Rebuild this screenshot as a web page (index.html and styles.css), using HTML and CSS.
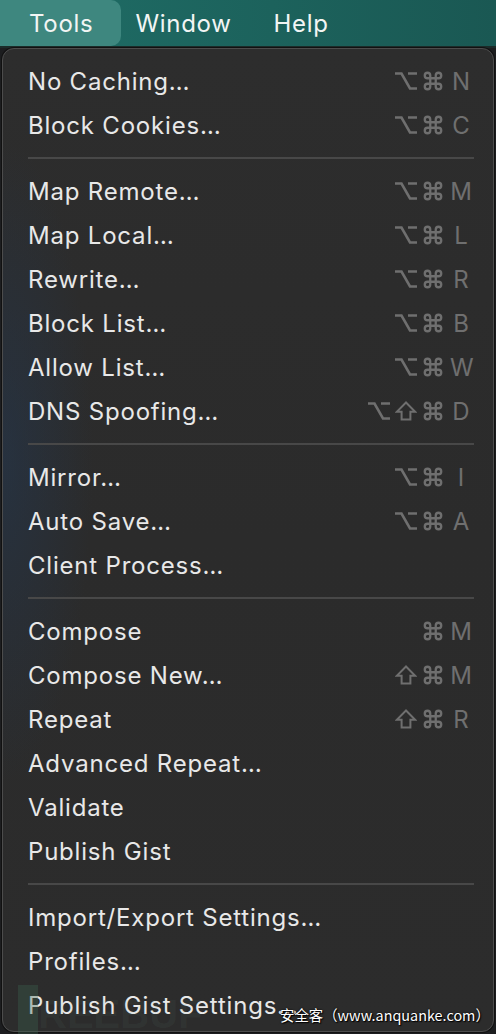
FILE: index.html
```html
<!DOCTYPE html>
<html>
<head>
<meta charset="utf-8">
<link rel="stylesheet" href="styles.css">
</head>
<body>
<div class="menubar">
  <span class="mb-item active">Tools</span>
  <span class="mb-item">Window</span>
  <span class="mb-item">Help</span>
</div>
<div class="menu">
  <div class="item"><span class="label">No Caching…</span><span class="sc"><svg class="opt" viewBox="0 0 22 18"><path d="M0 1.5H6.5L15 16.5H22M13 1.5H22"/></svg><svg class="cmd" viewBox="0 0 24 24"><path d="M9 6a3 3 0 1 0-3 3h12a3 3 0 1 0-3-3v12a3 3 0 1 0 3-3H6a3 3 0 1 0 3 3z"/></svg><span class="key">N</span></span></div>
  <div class="item"><span class="label">Block Cookies…</span><span class="sc"><svg class="opt" viewBox="0 0 22 18"><path d="M0 1.5H6.5L15 16.5H22M13 1.5H22"/></svg><svg class="cmd" viewBox="0 0 24 24"><path d="M9 6a3 3 0 1 0-3 3h12a3 3 0 1 0-3-3v12a3 3 0 1 0 3-3H6a3 3 0 1 0 3 3z"/></svg><span class="key">C</span></span></div>
  <div class="sep"></div>
  <div class="item"><span class="label">Map Remote…</span><span class="sc"><svg class="opt" viewBox="0 0 22 18"><path d="M0 1.5H6.5L15 16.5H22M13 1.5H22"/></svg><svg class="cmd" viewBox="0 0 24 24"><path d="M9 6a3 3 0 1 0-3 3h12a3 3 0 1 0-3-3v12a3 3 0 1 0 3-3H6a3 3 0 1 0 3 3z"/></svg><span class="key">M</span></span></div>
  <div class="item"><span class="label">Map Local…</span><span class="sc"><svg class="opt" viewBox="0 0 22 18"><path d="M0 1.5H6.5L15 16.5H22M13 1.5H22"/></svg><svg class="cmd" viewBox="0 0 24 24"><path d="M9 6a3 3 0 1 0-3 3h12a3 3 0 1 0-3-3v12a3 3 0 1 0 3-3H6a3 3 0 1 0 3 3z"/></svg><span class="key">L</span></span></div>
  <div class="item"><span class="label">Rewrite…</span><span class="sc"><svg class="opt" viewBox="0 0 22 18"><path d="M0 1.5H6.5L15 16.5H22M13 1.5H22"/></svg><svg class="cmd" viewBox="0 0 24 24"><path d="M9 6a3 3 0 1 0-3 3h12a3 3 0 1 0-3-3v12a3 3 0 1 0 3-3H6a3 3 0 1 0 3 3z"/></svg><span class="key">R</span></span></div>
  <div class="item"><span class="label">Block List…</span><span class="sc"><svg class="opt" viewBox="0 0 22 18"><path d="M0 1.5H6.5L15 16.5H22M13 1.5H22"/></svg><svg class="cmd" viewBox="0 0 24 24"><path d="M9 6a3 3 0 1 0-3 3h12a3 3 0 1 0-3-3v12a3 3 0 1 0 3-3H6a3 3 0 1 0 3 3z"/></svg><span class="key">B</span></span></div>
  <div class="item"><span class="label">Allow List…</span><span class="sc"><svg class="opt" viewBox="0 0 22 18"><path d="M0 1.5H6.5L15 16.5H22M13 1.5H22"/></svg><svg class="cmd" viewBox="0 0 24 24"><path d="M9 6a3 3 0 1 0-3 3h12a3 3 0 1 0-3-3v12a3 3 0 1 0 3-3H6a3 3 0 1 0 3 3z"/></svg><span class="key">W</span></span></div>
  <div class="item"><span class="label">DNS Spoofing…</span><span class="sc"><svg class="opt" viewBox="0 0 22 18"><path d="M0 1.5H6.5L15 16.5H22M13 1.5H22"/></svg><svg class="shift" viewBox="0 0 22 20"><path d="M11 1.5L1.8 10.8H6.6V18.6H15.4V10.8H20.2Z"/></svg><svg class="cmd" viewBox="0 0 24 24"><path d="M9 6a3 3 0 1 0-3 3h12a3 3 0 1 0-3-3v12a3 3 0 1 0 3-3H6a3 3 0 1 0 3 3z"/></svg><span class="key">D</span></span></div>
  <div class="sep"></div>
  <div class="item"><span class="label">Mirror…</span><span class="sc"><svg class="opt" viewBox="0 0 22 18"><path d="M0 1.5H6.5L15 16.5H22M13 1.5H22"/></svg><svg class="cmd" viewBox="0 0 24 24"><path d="M9 6a3 3 0 1 0-3 3h12a3 3 0 1 0-3-3v12a3 3 0 1 0 3-3H6a3 3 0 1 0 3 3z"/></svg><span class="key">I</span></span></div>
  <div class="item"><span class="label">Auto Save…</span><span class="sc"><svg class="opt" viewBox="0 0 22 18"><path d="M0 1.5H6.5L15 16.5H22M13 1.5H22"/></svg><svg class="cmd" viewBox="0 0 24 24"><path d="M9 6a3 3 0 1 0-3 3h12a3 3 0 1 0-3-3v12a3 3 0 1 0 3-3H6a3 3 0 1 0 3 3z"/></svg><span class="key">A</span></span></div>
  <div class="item"><span class="label">Client Process…</span></div>
  <div class="sep"></div>
  <div class="item"><span class="label">Compose</span><span class="sc"><svg class="cmd" viewBox="0 0 24 24"><path d="M9 6a3 3 0 1 0-3 3h12a3 3 0 1 0-3-3v12a3 3 0 1 0 3-3H6a3 3 0 1 0 3 3z"/></svg><span class="key">M</span></span></div>
  <div class="item"><span class="label">Compose New…</span><span class="sc"><svg class="shift" viewBox="0 0 22 20"><path d="M11 1.5L1.8 10.8H6.6V18.6H15.4V10.8H20.2Z"/></svg><svg class="cmd" viewBox="0 0 24 24"><path d="M9 6a3 3 0 1 0-3 3h12a3 3 0 1 0-3-3v12a3 3 0 1 0 3-3H6a3 3 0 1 0 3 3z"/></svg><span class="key">M</span></span></div>
  <div class="item"><span class="label">Repeat</span><span class="sc"><svg class="shift" viewBox="0 0 22 20"><path d="M11 1.5L1.8 10.8H6.6V18.6H15.4V10.8H20.2Z"/></svg><svg class="cmd" viewBox="0 0 24 24"><path d="M9 6a3 3 0 1 0-3 3h12a3 3 0 1 0-3-3v12a3 3 0 1 0 3-3H6a3 3 0 1 0 3 3z"/></svg><span class="key">R</span></span></div>
  <div class="item"><span class="label">Advanced Repeat…</span></div>
  <div class="item"><span class="label">Validate</span></div>
  <div class="item"><span class="label">Publish Gist</span></div>
  <div class="sep"></div>
  <div class="item"><span class="label">Import/Export Settings…</span></div>
  <div class="item"><span class="label">Profiles…</span></div>
  <div class="item"><span class="label">Publish Gist Settings…</span></div>
</div>
<div class="wm-logo"><span class="wm-bar"></span><span class="wm-text">REEBUF</span></div>
<div class="wm-cn">安全客（www.anquanke.com）</div>
</body>
</html>
```
FILE: styles.css
```css
html, body {
  margin: 0;
  padding: 0;
}
body {
  width: 496px;
  height: 1034px;
  overflow: hidden;
  background: #1c1d1f;
  font-family: Inter, "Noto Sans", "Liberation Sans", sans-serif;
  position: relative;
}
.menubar {
  height: 46px;
  display: flex;
  align-items: stretch;
  background: linear-gradient(90deg, #1f6d66 0%, #1c625c 55%, #1a5853 100%);
  border-bottom: 2px solid #1b2b29;
}
.mb-item {
  display: flex;
  align-items: center;
  padding: 0 21px;
  color: #f2f5f4;
  font-size: 24px;
  letter-spacing: 0.7px;
}
.mb-item.active {
  padding: 0 28px 0 29px;
  margin-right: -7px;
  background: #3e877f;
  border-radius: 0 10px 10px 0;
}
.menu {
  margin: 0 2px 0 2px;
  height: 984px;
  box-sizing: border-box;
  padding: 10px 0 5px 0;
  background:
    radial-gradient(ellipse 90px 320px at 0 42%, rgba(35, 55, 80, 0.55), rgba(35, 55, 80, 0) 100%),
    linear-gradient(180deg, #2d2d2d 0%, #2b2b2b 50%, #2c2c2c 100%);
  border: 1px solid #4c4c4c;
  border-radius: 12px;
  box-shadow: 0 0 0 1px #111;
}
.item {
  height: 44px;
  display: flex;
  align-items: center;
  padding: 0 21px 0 25px;
  color: #e8e8e8;
  font-size: 24px;
}
.label {
  white-space: nowrap;
  letter-spacing: 0.8px;
}
.sc {
  margin-left: auto;
  display: flex;
  align-items: center;
  gap: 5px;
  color: #6f6f6f;
}
.sc svg {
  fill: none;
  stroke: #6f6f6f;
  stroke-linejoin: miter;
}
.opt {
  width: 22px;
  height: 18px;
  stroke-width: 2.6;
}
.shift {
  width: 22px;
  height: 20px;
  stroke-width: 2;
}
.cmd {
  width: 22px;
  height: 22px;
  stroke-width: 2.5;
}
.key {
  width: 22px;
  text-align: center;
  margin-left: 1px;
}
.sep {
  height: 22px;
  display: flex;
  align-items: center;
  padding: 0 19px 0 25px;
}
.sep::before {
  content: "";
  flex: 1;
  height: 2px;
  background: #484848;
}
.wm-logo {
  position: absolute;
  left: 18px;
  top: 985px;
  height: 49px;
  display: flex;
  align-items: flex-end;
  pointer-events: none;
}
.wm-bar {
  width: 20px;
  height: 49px;
  background: rgba(60, 100, 80, 0.35);
}
.wm-text {
  font-family: "Liberation Sans", sans-serif;
  font-weight: bold;
  font-size: 40px;
  line-height: 40px;
  color: rgba(120, 160, 140, 0.08);
}
.wm-cn {
  position: absolute;
  left: 280px;
  top: 1005px;
  font-family: "Noto Sans CJK SC", "Noto Sans", sans-serif;
  font-size: 14.4px;
  line-height: 20px;
  color: #ffffff;
  text-shadow: 0 0 2px #000, 1px 1px 1px #000;
  white-space: nowrap;
}
```
